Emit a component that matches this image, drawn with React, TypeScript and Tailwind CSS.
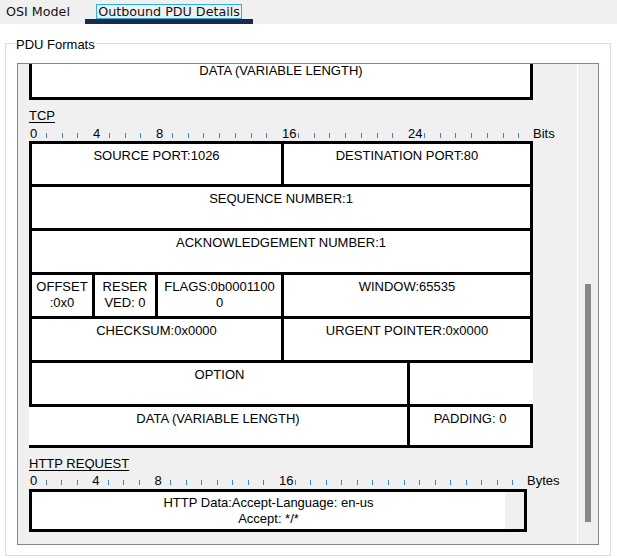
import React from 'react';

type RulerProps = {
    width: number;
    labels: number[];
    endLabel: string;
};

// ruler above each PDU layer: 32 positions, numbers at a few, ticks elsewhere
function Ruler({ width, labels, endLabel }: RulerProps) {
    const unit = width / 32;
    const ticks: number[] = [];
    for (let i = 1; i < 32; i++) {
        if (!labels.includes(i)) ticks.push(i);
    }
    return (
        <div className="relative h-[15px] text-[13px] leading-[15px] text-black" style={{ width: width + 40 }}>
            <svg className="absolute left-0 top-0" width={width + 2} height={15}>
                {ticks.map((t) => (
                    <rect key={t} x={Math.round(1 + t * unit)} y={7} width={1} height={5} fill="#3d83cf" />
                ))}
            </svg>
            {labels.map((l) => (
                <span key={l} className="absolute top-0" style={{ left: 1 + l * unit }}>
                    {l}
                </span>
            ))}
            <span className="absolute top-0" style={{ left: 1 + 32 * unit - 1 }}>
                {endLabel}
            </span>
        </div>
    );
}

function Cell({ className = '', children }: { className?: string; children?: React.ReactNode }) {
    return (
        <div className={`h-full bg-white border-black text-center pt-[4px] overflow-hidden ${className}`}>
            {children}
        </div>
    );
}

export default function App() {
    return (
        <div className="w-[617px] h-[558px] bg-white overflow-hidden font-['Liberation_Sans',Arial,sans-serif] text-black">
            {/* Tabs */}
            <div className="h-[24px] bg-[#f0f0f0] flex font-['DejaVu_Sans',sans-serif] text-[12.7px] text-[#111]">
                <div className="w-[85px] pl-[6px] pt-[4px] leading-[15px]">OSI Model</div>
                <div className="relative w-[168px] flex justify-center pt-[4px]">
                    <span className="h-[15px] border border-[#27b2e6] px-[1px] leading-[13px]">
                        Outbound PDU Details
                    </span>
                    <div className="absolute left-0 right-0 bottom-0 h-[5px] bg-[#1a2a4c]" />
                </div>
            </div>

            {/* Group box */}
            <div className="relative mt-[19px] ml-[5px] w-[606px] h-[513px] border border-[#dcdcdc]">
                <span className="absolute -top-[7px] left-[9px] bg-white px-[1px] text-[13px] leading-[15px]">
                    PDU Formats
                </span>

                <div className="mt-[19px] ml-[11px] w-[582px] h-[482px] border border-[#828790] flex">
                    {/* scrolled content */}
                    <div className="flex-1 bg-[#f0f0f0] overflow-hidden pl-[11px]">
                        <div className="-mt-[8px] text-[13px] leading-[16px]">
                            {/* tail of previous layer */}
                            <div className="w-[504px] h-[44px] border-[3px] border-black bg-white text-center pt-[4px]">
                                DATA (VARIABLE LENGTH)
                            </div>

                            {/* TCP */}
                            <div className="mt-[8px] leading-[15px] underline underline-offset-[2px]">TCP</div>
                            <div className="mt-[3px]">
                                <Ruler width={504} labels={[0, 4, 8, 16, 24]} endLabel="Bits" />
                            </div>
                            <div className="w-[504px]">
                                <div className="flex h-[43px] border-t-[3px] border-black bg-white">
                                    <Cell className="w-[252px] border-l-[3px]">SOURCE PORT:1026</Cell>
                                    <Cell className="flex-1 border-l-[3px] border-r-[3px]">DESTINATION PORT:80</Cell>
                                </div>
                                <div className="flex h-[44px] border-t-[3px] border-black bg-white">
                                    <Cell className="flex-1 border-l-[3px] border-r-[3px]">SEQUENCE NUMBER:1</Cell>
                                </div>
                                <div className="flex h-[44px] border-t-[3px] border-black bg-white">
                                    <Cell className="flex-1 border-l-[3px] border-r-[3px]">ACKNOWLEDGEMENT NUMBER:1</Cell>
                                </div>
                                <div className="flex h-[44px] border-t-[3px] border-black bg-white">
                                    <Cell className="w-[63px] border-l-[3px]">
                                        OFFSET
                                        <br />
                                        :0x0
                                    </Cell>
                                    <Cell className="w-[63px] border-l-[3px]">
                                        RESER
                                        <br />
                                        VED: 0
                                    </Cell>
                                    <Cell className="w-[126px] border-l-[3px]">
                                        FLAGS:0b0001100
                                        <br />0
                                    </Cell>
                                    <Cell className="flex-1 border-l-[3px] border-r-[3px]">WINDOW:65535</Cell>
                                </div>
                                <div className="flex h-[44px] border-t-[3px] border-black bg-white">
                                    <Cell className="w-[252px] border-l-[3px]">CHECKSUM:0x0000</Cell>
                                    <Cell className="flex-1 border-l-[3px] border-r-[3px]">URGENT POINTER:0x0000</Cell>
                                </div>
                                <div className="flex h-[44px] border-t-[3px] border-black bg-white">
                                    <Cell className="w-[378px] border-l-[3px]">OPTION</Cell>
                                    <Cell className="flex-1 border-l-[3px]" />
                                </div>
                                <div className="flex h-[44px] border-t-[3px] border-b-[3px] border-black bg-white">
                                    <Cell className="w-[378px]">DATA (VARIABLE LENGTH)</Cell>
                                    <Cell className="flex-1 border-l-[3px] border-r-[3px]">PADDING: 0</Cell>
                                </div>
                            </div>

                            {/* HTTP */}
                            <div className="mt-[8px] leading-[15px] underline underline-offset-[2px]">HTTP REQUEST</div>
                            <div className="mt-[2px]">
                                <Ruler width={498} labels={[0, 4, 8, 16]} endLabel="Bytes" />
                            </div>
                            <div className="mt-[1px] w-[498px] h-[43px] border-[3px] border-black bg-[#f0f0f0] flex">
                                <div className="w-[473px] h-full bg-white text-center pt-[3px] overflow-hidden">
                                    HTTP Data:Accept-Language: en-us
                                    <br />
                                    Accept: */*
                                </div>
                            </div>
                        </div>
                    </div>

                    {/* vertical scrollbar */}
                    <div className="w-[21px] h-full border-l border-white bg-[#f0f0f0] pt-[220px] pl-[7px]">
                        <div className="w-[6px] h-[238px] bg-[#888888]" />
                    </div>
                </div>
            </div>
        </div>
    );
}
